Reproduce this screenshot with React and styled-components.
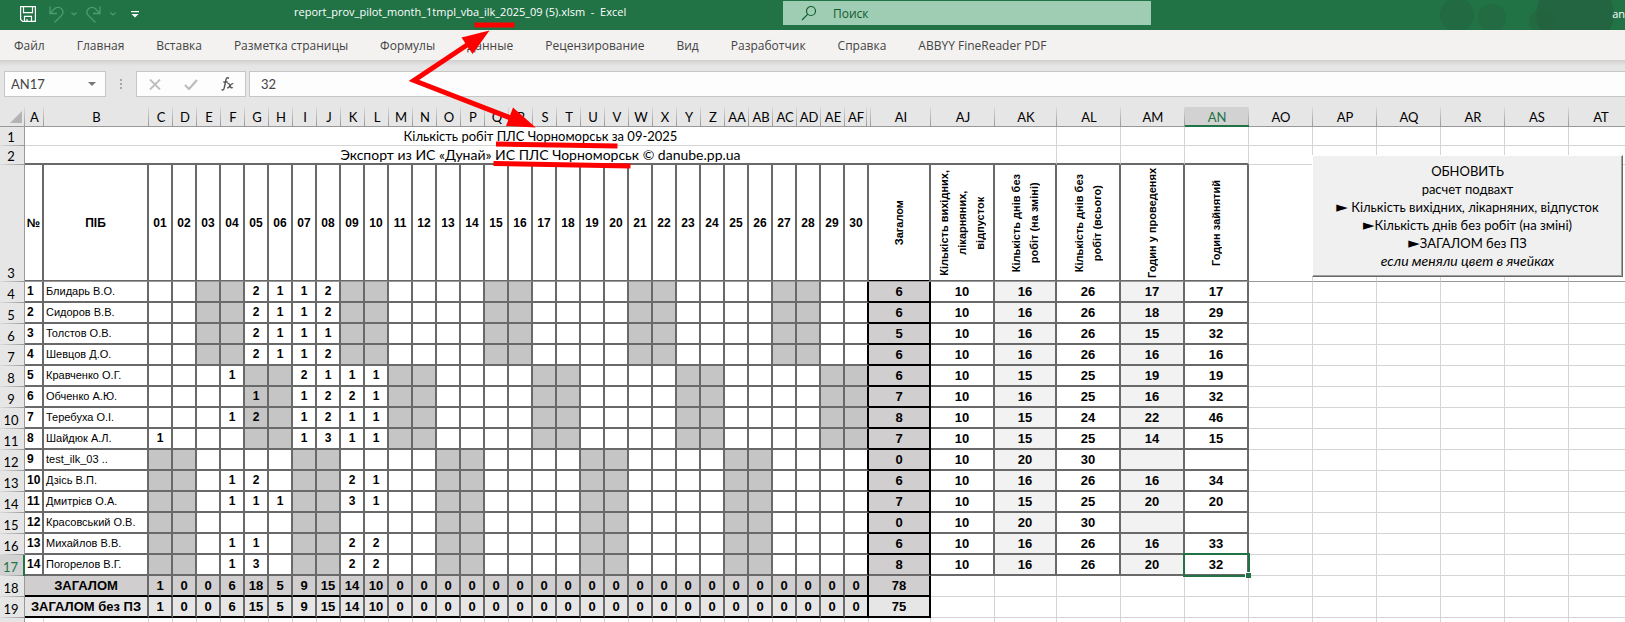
import React from "react";
import styled, { createGlobalStyle, css } from "styled-components";

const CALC = `Lato, "Open Sans", sans-serif`;
const UI = `"Open Sans", "Noto Sans", sans-serif`;
const ARIAL = `"Liberation Sans", Arial, sans-serif`;
const GREEN = "#217346";
const DARK = "#696969";
const LINE = "#d4d4d4";

const GlobalStyle = createGlobalStyle`
  *, *::before, *::after { box-sizing: border-box; }
  body { margin: 0; background: #fff; color: #000; }
  button, input { font: inherit; color: inherit; margin: 0; padding: 0; border: 0; background: none; }
`;

const Window = styled.div`
  position: relative;
  height: 100vh;
  overflow: hidden;
  display: flex;
  flex-direction: column;
  font-family: ${UI};
`;

/* ---------- title bar ---------- */
const TitleBar = styled.header`
  position: relative;
  flex: none;
  display: grid;
  grid-template-columns: 294px 489px minmax(200px, 368px) 1fr;
  height: 30px;
  background: ${GREEN};
  color: #fff;
`;
const QuickAccess = styled.div`
  display: flex;
  align-items: center;
  height: 28px;
  padding-left: 15px;
`;
const IconButton = styled.button`
  display: flex;
  align-items: center;
  justify-content: center;
  width: ${(p) => p.$w}px;
  height: 24px;
`;
const FileName = styled.div`
  font-size: 11px;
  line-height: 24px;
  white-space: pre;
`;
const Search = styled.label`
  display: flex;
  align-items: center;
  gap: 16px;
  height: 24px;
  margin-top: 1px;
  padding-left: 18px;
  background: #9fcdb3;
  color: #0f5a2f;
  font-size: 12px;
`;
const SearchInput = styled.input`
  flex: 1;
  min-width: 0;
  outline: 0;
  &::placeholder { color: #0f5a2f; opacity: 1; }
`;
const Account = styled.div`
  position: relative;
  overflow: hidden;
  height: 30px;
  font-size: 11px;
  line-height: 28px;
`;
const Clouds = styled.svg`
  position: absolute;
  top: 0;
  right: 0;
`;
const UserName = styled.span`
  position: absolute;
  top: 0;
  right: 0;
`;

/* ---------- ribbon ---------- */
const Ribbon = styled.nav`
  flex: none;
  display: flex;
  gap: 32px;
  height: 30px;
  padding: 1px 0 0 14px;
  background: #f3f2f1;
`;
const Tab = styled.button`
  height: 29px;
  font-size: 12px;
  line-height: 29px;
  color: #444;
  white-space: nowrap;
`;

/* ---------- formula bar ---------- */
const FormulaBar = styled.div`
  flex: none;
  display: flex;
  height: 47px;
  padding: 11px 0 0 4px;
  background: linear-gradient(#cfcfcf, #e6e6e6 6px);
  color: #444;
  font-family: ${CALC};
  font-size: 13px;
`;
const Box = styled.div`
  display: flex;
  align-items: center;
  height: 26px;
  border: 1px solid #c6c6c6;
  background: #fdfdfd;
`;
const NameBox = styled(Box)`
  width: 102px;
`;
const NameInput = styled.input`
  width: 76px;
  padding-left: 6px;
`;
const Grip = styled.svg`
  width: 30px;
  height: 26px;
`;
const FormulaTools = styled(Box)`
  width: 110px;
  margin-right: 3px;
`;
const FormulaBox = styled(Box)`
  flex: 1;
  border-right: 0;
`;
const FormulaInput = styled.input`
  width: 100%;
  padding-left: 11px;
`;

/* ---------- sheet ---------- */
const SheetArea = styled.main`
  position: relative;
  flex: 1;
  min-height: 0;
`;
const Table = styled.table`
  width: 1633px;
  table-layout: fixed;
  border-collapse: separate;
  border-spacing: 0;
`;
const Row = styled.tr`
  height: ${(p) => p.$h || 21}px;
`;
const ColHead = styled.th`
  padding: 1px 0 0;
  border-bottom: 1px solid #999;
  background:
    linear-gradient(#dcdcdc, #999) right / 1px 100% no-repeat,
    #e6e6e6;
  font: 400 13px/17px ${CALC};
  white-space: nowrap;
  ${(p) =>
    p.$active &&
    css`
      border-bottom-color: ${GREEN};
      box-shadow: inset 0 -1px 0 ${GREEN};
      background-color: #d2d2d2;
      color: ${GREEN};
    `}
`;
const Corner = styled(ColHead)`
  padding: 0;
  text-align: right;
  svg { display: block; margin-left: auto; }
`;
const RowHead = styled.th`
  padding: 0 2px 0 0;
  border-right: 1px solid #999;
  background:
    linear-gradient(90deg, #dcdcdc, #999) bottom / 100% 1px no-repeat,
    #e6e6e6;
  font: 400 13px/18px ${CALC};
  vertical-align: bottom;
  ${(p) =>
    p.$active &&
    css`
      border-right: 2px solid ${GREEN};
      background-color: #d2d2d2;
      color: ${GREEN};
    `}
`;
const cellBase = css`
  padding: 0;
  border-right: 1px solid ${LINE};
  border-bottom: 1px solid ${LINE};
  background: #fff;
  text-align: center;
  white-space: nowrap;
`;
const Blank = styled.td`
  ${cellBase}
  ${(p) => p.$freeze && "border-bottom-color: #999;"}
  ${(p) => p.$dark && `border-bottom: 2px solid ${DARK};`}
`;
const Caption = styled.td`
  ${cellBase}
  font: 13px/17px ${CALC};
`;
const Subcaption = styled(Caption)`
  border-bottom: 2px solid ${DARK};
  font-size: 14px;
`;
const HeadCell = styled.th`
  ${cellBase}
  border-right: 2px solid ${DARK};
  border-bottom: 1px solid #999;
  box-shadow: inset 0 -1px 0 ${(p) => (p.$black ? "#000" : DARK)};
  font: 700 12px/18px ${ARIAL};
`;
const Vertical = styled.span`
  display: inline-block;
  writing-mode: vertical-rl;
  transform: rotate(180deg);
  vertical-align: middle;
  font-size: 11px;
  line-height: 18px;
  white-space: pre;
`;
const Cell = styled.td`
  ${cellBase}
  position: relative;
  border-right: 2px solid ${(p) => (p.$blackRight ? "#000" : DARK)};
  border-bottom: 2px solid ${(p) => (p.$blackBottom ? "#000" : DARK)};
  background: ${(p) => p.$bg || "#fff"};
  font: 700 12px/17px ${ARIAL};
`;
const NumberCell = styled(Cell)`
  padding-left: 2px;
  text-align: left;
`;
const NameCell = styled(Cell)`
  padding-left: 2px;
  font-size: 11px;
  font-weight: 400;
  text-align: left;
`;
const SumCell = styled(Cell)`
  font-size: 13px;
`;
const Selection = styled.div`
  position: absolute;
  inset: -2px -3px -3px -2px;
  border: 2px solid ${GREEN};
  &::after {
    content: "";
    position: absolute;
    right: -3px;
    bottom: -3px;
    width: 6px;
    height: 6px;
    border: solid #fff;
    border-width: 1px 0 0 1px;
    background: ${GREEN};
  }
`;
const MacroButton = styled.button`
  && {
    position: absolute;
    left: 1312px;
    top: 48px;
    width: 311px;
    height: 122px;
    border: 1px solid;
    border-color: #fff ${DARK} ${DARK} #fff;
    box-shadow: inset -1px -1px 0 #a0a0a0;
    background: #f0f0f0;
    font: 13px/18px ${CALC};
    white-space: nowrap;
  }
  em { font-size: 14px; }
`;
const Pointer = styled.span`
  font-family: "DejaVu Sans", sans-serif;
  font-size: 15px;
  line-height: 0;
`;
const Annotations = styled.svg`
  position: absolute;
  left: 0;
  top: 0;
  pointer-events: none;
`;

const TABS = ["Файл", "Главная", "Вставка", "Разметка страницы", "Формулы", "Данные",
  "Рецензирование", "Вид", "Разработчик", "Справка", "ABBYY FineReader PDF"];

const DAY_COLS = "C D E F G H I J K L M N O P Q R S T U V W X Y Z AA AB AC AD AE AF".split(" ");
const EXTRA = [["AJ", 64], ["AK", 62], ["AL", 64], ["AM", 64], ["AN", 64]];
const FREE = ["AO", "AP", "AQ", "AR", "AS", "AT"];
const DAYS = Array.from({ length: 30 }, (_, i) => i + 1);

const PEOPLE = [
  ["Блидарь В.О.", { 5: 2, 6: 1, 7: 1, 8: 2 }, 6, [10, 16, 26, 17, 17]],
  ["Сидоров В.В.", { 5: 2, 6: 1, 7: 1, 8: 2 }, 6, [10, 16, 26, 18, 29]],
  ["Толстов О.В.", { 5: 2, 6: 1, 7: 1, 8: 1 }, 5, [10, 16, 26, 15, 32]],
  ["Шевцов Д.О.", { 5: 2, 6: 1, 7: 1, 8: 2 }, 6, [10, 16, 26, 16, 16]],
  ["Кравченко О.Г.", { 4: 1, 7: 2, 8: 1, 9: 1, 10: 1 }, 6, [10, 15, 25, 19, 19]],
  ["Обченко А.Ю.", { 5: 1, 7: 1, 8: 2, 9: 2, 10: 1 }, 7, [10, 16, 25, 16, 32]],
  ["Теребуха О.І.", { 4: 1, 5: 2, 7: 1, 8: 2, 9: 1, 10: 1 }, 8, [10, 15, 24, 22, 46]],
  ["Шайдюк А.Л.", { 1: 1, 7: 1, 8: 3, 9: 1, 10: 1 }, 7, [10, 15, 25, 14, 15]],
  ["test_ilk_03 ..", {}, 0, [10, 20, 30, "", ""]],
  ["Дзісь В.П.", { 4: 1, 5: 2, 9: 2, 10: 1 }, 6, [10, 16, 26, 16, 34]],
  ["Дмитрієв О.А.", { 4: 1, 5: 1, 6: 1, 9: 3, 10: 1 }, 7, [10, 15, 25, 20, 20]],
  ["Красовський О.В.", {}, 0, [10, 20, 30, "", ""]],
  ["Михайлов В.В.", { 4: 1, 5: 1, 9: 2, 10: 2 }, 6, [10, 16, 26, 16, 33]],
  ["Погорелов В.Г.", { 4: 1, 5: 3, 9: 2, 10: 2 }, 8, [10, 16, 26, 20, 32]],
];
const TOTALS = [
  ["ЗАГАЛОМ", [1, 0, 0, 6, 18, 5, 9, 15, 14, 10], 78, "#d0cece"],
  ["ЗАГАЛОМ без ПЗ", [1, 0, 0, 6, 15, 5, 9, 15, 14, 10], 75, "#e7e6e6"],
];
const VERTICALS = [
  "Кількість вихідних,\nлікарняних,\nвідпусток",
  "Кількість днів без\nробіт (на зміні)",
  "Кількість днів без\nробіт (всього)",
  "Годин у проведенях",
  "Годин зайнятий",
];

/* Each watch is off two days out of six; the offset depends on its group. */
const isOff = (person, day) => {
  const start = person < 4 ? 3 : person < 8 ? 5 : 1;
  return (day - start + 6) % 6 < 2;
};

const FreeCells = (props) => FREE.map((c) => <Blank key={c} {...props} />);

function TitleIcons() {
  return (
    <QuickAccess>
      <IconButton $w={26} aria-label="Сохранить">
        <svg width="16" height="16" viewBox="0 0 16 16" fill="none" stroke="#fff" strokeWidth="1.2">
          <path d="M.6.6h14.8v14.8H2.6l-2-2zM3.5.6v6h9v-6M4.500 15.400v-5h7v5M7 15.400v-2.500" />
        </svg>
      </IconButton>
      <IconButton $w={30} aria-label="Отменить">
        <svg width="15" height="17" viewBox="0 0 15 17" fill="none" stroke="#4f9a70" strokeWidth="1.3">
          <path d="M1 .5v7h7M1 7.500L5 3.200C7 1 10.500 .8 12.500 2.800s2 4.700 0 6.700L5.500 16.500" />
        </svg>
      </IconButton>
      <IconButton $w={6} aria-label="Список отмены">
        <svg width="6" height="4" viewBox="0 0 6 4" fill="none" stroke="#4f9a70" strokeWidth="1.2"><path d="M.5.5L3 3 5.500.5" /></svg>
      </IconButton>
      <IconButton $w={33} aria-label="Вернуть">
        <svg width="15" height="17" viewBox="0 0 15 17" fill="none" stroke="#4f9a70" strokeWidth="1.3">
          <path d="M14 .5v7H7M14 7.500L10 3.200C8 1 4.500 .8 2.500 2.800s-2 4.700 0 6.700L9.500 16.500" />
        </svg>
      </IconButton>
      <IconButton $w={6} aria-label="Список возврата">
        <svg width="6" height="4" viewBox="0 0 6 4" fill="none" stroke="#4f9a70" strokeWidth="1.2"><path d="M.5.5L3 3 5.500.5" /></svg>
      </IconButton>
      <IconButton $w={38} aria-label="Настройка панели">
        <svg width="8" height="7" viewBox="0 0 8 7" fill="#fff"><path d="M0 0h8v1.200H0zM.5 3h7L4 6.500z" /></svg>
      </IconButton>
    </QuickAccess>
  );
}

export default function App() {
  return (
    <Window>
      <GlobalStyle />
      <TitleBar>
        <TitleIcons />
        <FileName>{"report_prov_pilot_month_1tmpl_vba_ilk_2025_09 (5).xlsm  -  Excel"}</FileName>
        <Search>
          <svg width="16" height="16" viewBox="0 0 16 16" fill="none" stroke="#0f5a2f" strokeWidth="1.200">
            <circle cx="10" cy="6" r="4.500" /><path d="M6.800 9.200L1 15" />
          </svg>
          <SearchInput placeholder="Поиск" aria-label="Поиск" />
        </Search>
        <Account>
          <Clouds width="220" height="30" viewBox="0 0 220 30" fill="#23643f" aria-hidden="true">
            <circle cx="52" cy="15" r="17" opacity=".6" />
            <circle cx="87" cy="18" r="14" opacity=".5" />
            <circle cx="137" cy="22" r="13" opacity=".6" />
            <ellipse cx="170" cy="14" rx="39" ry="34" opacity=".9" />
          </Clouds>
          <UserName>an</UserName>
        </Account>
      </TitleBar>

      <Ribbon>
        {TABS.map((t) => <Tab key={t}>{t}</Tab>)}
      </Ribbon>

      <FormulaBar>
        <NameBox>
          <NameInput defaultValue="AN17" aria-label="Имя" />
          <IconButton $w={22} aria-label="Список имён">
            <svg width="8" height="4" fill="#777"><path d="M0 0h8L4 4z" /></svg>
          </IconButton>
        </NameBox>
        <Grip viewBox="0 0 30 26" fill="#a6a6a6"><path d="M14 8h2v2h-2zM14 12h2v2h-2zM14 16h2v2h-2z" /></Grip>
        <FormulaTools>
          <IconButton $w={36} aria-label="Отмена">
            <svg width="12" height="11" viewBox="0 0 12 11" fill="none" stroke="#bdbdbd" strokeWidth="1.800"><path d="M1 .5l10 10M11 .5l-10 10" /></svg>
          </IconButton>
          <IconButton $w={36} aria-label="Ввод">
            <svg width="14" height="11" viewBox="0 0 14 11" fill="none" stroke="#bdbdbd" strokeWidth="2.200"><path d="M1 6l4 4L13 1" /></svg>
          </IconButton>
          <IconButton $w={36} aria-label="Вставить функцию">
            <svg width="13" height="14" viewBox="0 0 13 14" fill="none" stroke="#555" strokeWidth="1.400">
              <path d="M8 1.500C6.500 0 5.300 1 4.900 3L3.300 10.500C2.900 12.800 2 13.500.5 12.500M2.300 5h4.500" />
              <path d="M6.500 6.500c1.500-.5 2 .5 2.500 2s1 3 2.800 2M12.300 6.700C10.500 6 9.500 8 8.500 9.500S7 11 6.200 10.700" />
            </svg>
          </IconButton>
        </FormulaTools>
        <FormulaBox><FormulaInput defaultValue="32" aria-label="Строка формул" /></FormulaBox>
      </FormulaBar>

      <SheetArea>
        <Table>
          <colgroup>
            <col style={{ width: 25 }} />
            <col style={{ width: 19 }} />
            <col style={{ width: 105 }} />
            {DAYS.map((d) => <col key={d} style={{ width: d < 30 ? 24 : 22 }} />)}
            <col style={{ width: 2 }} />
            <col style={{ width: 2 }} />
            <col style={{ width: 60 }} />
            {EXTRA.map(([c, w]) => <col key={c} style={{ width: w }} />)}
            {FREE.map((c) => <col key={c} style={{ width: 64 }} />)}
          </colgroup>
          <thead>
            <Row $h={20}>
              <Corner aria-label="Выделить всё">
                <svg width="15" height="12" fill="#b4b4b4"><path d="M12 0v12H0z" /></svg>
              </Corner>
              <ColHead>A</ColHead>
              <ColHead>B</ColHead>
              {DAY_COLS.map((c) => <ColHead key={c}>{c}</ColHead>)}
              <ColHead colSpan={2} />
              <ColHead>AI</ColHead>
              {EXTRA.map(([c]) => <ColHead key={c} $active={c === "AN"}>{c}</ColHead>)}
              {FREE.map((c) => <ColHead key={c}>{c}</ColHead>)}
            </Row>
          </thead>
          <tbody>
            <Row $h={19}>
              <RowHead>1</RowHead>
              <Caption colSpan={37}>Кількість робіт ПЛС Чорноморськ за 09-2025</Caption>
              <Blank /><Blank /><Blank />
              <FreeCells />
            </Row>
            <Row $h={19}>
              <RowHead>2</RowHead>
              <Subcaption colSpan={37}>Экспорт из ИС «Дунай» ИС ПЛС Чорноморськ © danube.pp.ua</Subcaption>
              <Blank $dark /><Blank $dark /><Blank $dark />
              <FreeCells />
            </Row>
            <Row $h={117}>
              <RowHead>3</RowHead>
              <HeadCell>№</HeadCell>
              <HeadCell>ПІБ</HeadCell>
              {DAYS.map((d) => (
                <HeadCell key={d} colSpan={d === 30 ? 2 : 1}>{String(d).padStart(2, "0")}</HeadCell>
              ))}
              <HeadCell colSpan={2} $black><Vertical>Загалом</Vertical></HeadCell>
              {VERTICALS.map((v, i) => <HeadCell key={i}><Vertical>{v}</Vertical></HeadCell>)}
              <FreeCells $freeze />
            </Row>
            {PEOPLE.map(([name, days, total, extra], i) => (
              <Row key={name}>
                <RowHead $active={i === 13}>{i + 4}</RowHead>
                <NumberCell>{i + 1}</NumberCell>
                <NameCell>{name}</NameCell>
                {DAYS.map((d) => (
                  <Cell key={d} colSpan={d === 30 ? 2 : 1} $blackRight={d === 30}
                    $bg={isOff(i, d) ? "#c5c5c5" : undefined}>
                    {days[d]}
                  </Cell>
                ))}
                <SumCell colSpan={2} $bg="#d0cece" $blackRight $blackBottom={i < 13}>{total}</SumCell>
                {extra.map((v, k) => (
                  <SumCell key={k} $bg={k % 2 ? "#f2f2f2" : undefined}>
                    {v}
                    {i === 13 && k === 4 && <Selection />}
                  </SumCell>
                ))}
                <FreeCells />
              </Row>
            ))}
            {TOTALS.map(([label, values, total, bg], i) => (
              <Row key={label}>
                <RowHead>{i + 18}</RowHead>
                <SumCell colSpan={2} $bg={bg} $blackBottom>{label}</SumCell>
                {DAYS.map((d) => (
                  <SumCell key={d} colSpan={d === 30 ? 2 : 1} $bg={bg} $blackBottom $blackRight={d === 30}>
                    {values[d - 1] || 0}
                  </SumCell>
                ))}
                <SumCell colSpan={2} $bg={bg} $blackBottom $blackRight>{total}</SumCell>
                {EXTRA.map(([c]) => <Blank key={c} />)}
                <FreeCells />
              </Row>
            ))}
            <Row>
              <RowHead />
              <Blank /><Blank />
              {DAYS.map((d) => <Blank key={d} colSpan={d === 30 ? 2 : 1} />)}
              <Blank colSpan={2} />
              {EXTRA.map(([c]) => <Blank key={c} />)}
              <FreeCells />
            </Row>
          </tbody>
        </Table>
        <MacroButton>
          ОБНОВИТЬ<br />
          расчет подвахт<br />
          <Pointer>►</Pointer> Кількість вихідних, лікарняних, відпусток<br />
          <Pointer>►</Pointer>Кількість днів без робіт (на зміні)<br />
          <Pointer>►</Pointer>ЗАГАЛОМ без ПЗ<br />
          <em>если меняли цвет в ячейках</em>
        </MacroButton>
      </SheetArea>

      <Annotations width="640" height="180" viewBox="0 0 640 180" fill="red" stroke="red" strokeWidth="5" aria-hidden="true">
        <path d="M474.500 25h40M496 144l121.500 2M493.500 163.500l137 2.500M470 43L414 80.500l98 38" fill="none" />
        <path d="M489.500 30.500l-28 7 11 16.500zM535.700 127.500L513 107.500l-7 18.500z" stroke="none" />
      </Annotations>
    </Window>
  );
}
